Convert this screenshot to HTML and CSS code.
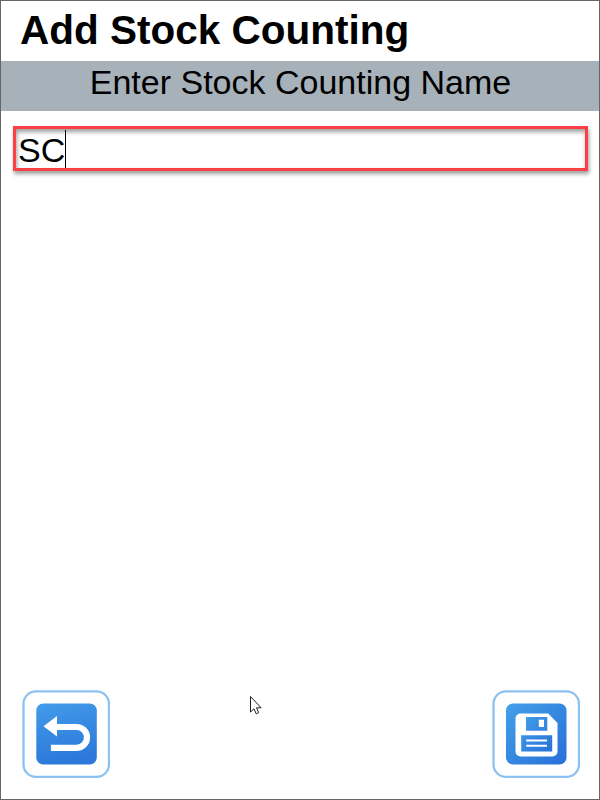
FILE: index.html
```html
<!DOCTYPE html>
<html lang="en">
<head>
<meta charset="utf-8">
<title>Add Stock Counting</title>
<link rel="stylesheet" href="styles.css">
</head>
<body>
<main class="screen">
  <h1 class="title">Add Stock Counting</h1>
  <h2 class="prompt">Enter Stock Counting Name</h2>
  <div class="field"><span class="value">SC</span><span class="caret"></span></div>
  <footer class="actions">
    <button class="action" aria-label="Back">
      <svg width="88" height="88" viewBox="0 0 88 88">
        <defs><linearGradient id="back" x1="0" y1="0" x2=".25" y2="1"><stop offset="0" stop-color="#439be9"/><stop offset="1" stop-color="#2c79db"/></linearGradient></defs>
        <rect x="1.500" y="1.400" width="85.500" height="85.500" rx="12.500" fill="#fff" stroke="#8dc1f2" stroke-width="2.300"/>
        <g transform="translate(14.300 13.500)">
          <rect width="60.500" height="61" rx="7" fill="url(#back)"/>
          <path d="M7.200 22.700 20.700 12.600v20.400z" fill="#fff"/>
          <path d="M19 23.500h21.300a10.400 10.400 0 0 1 0 20.800H14.600" fill="none" stroke="#fff" stroke-width="6.200"/>
        </g>
      </svg>
    </button>
    <button class="action" aria-label="Save">
      <svg width="88" height="88" viewBox="0 0 88 88">
        <defs><linearGradient id="save" x1="0" y1="0" x2="1" y2="1"><stop offset="0" stop-color="#439fe9"/><stop offset="1" stop-color="#2870d8"/></linearGradient></defs>
        <rect x="1.500" y="1.400" width="85.500" height="85.500" rx="12.500" fill="#fff" stroke="#8dc1f2" stroke-width="2.300"/>
        <g transform="translate(14 13.500)">
          <rect width="60.500" height="61" rx="7" fill="url(#save)"/>
          <path d="M14 10h28.200l9.300 9.500V48a5 5 0 0 1-5 5H14.500a5 5 0 0 1-5-5V15a5 5 0 0 1 5-5z" fill="#fff"/>
          <path d="M20 13.500h21.300v13.700H20zM15.200 31.700h31V48h-31z" fill="url(#save)"/>
          <path d="M32.800 16.200H38v7.300h-5.200zM20.200 36h20.800v2H20.200zM20.200 41.300h20.800v2H20.200z" fill="#fff"/>
        </g>
      </svg>
    </button>
  </footer>
  <svg class="pointer" width="14" height="21" viewBox="0 0 14 21"><path d="M2.500 1.500v15.500l3.500-3.200 2.200 5 2.500-1.100-2.200-4.900h4.600z" fill="#fff" stroke="#20202c" stroke-width="1"/></svg>
</main>
</body>
</html>
```
FILE: styles.css
```css
* { box-sizing: border-box; }
body { margin: 0; font-family: "Liberation Sans", Arial, sans-serif; color: #000; }
.screen {
  position: relative;
  display: flex;
  flex-direction: column;
  width: 600px;
  height: 800px;
  border: 1px solid #666;
  background: #fff;
}
.title {
  height: 60px;
  margin: 0;
  padding: 6px 0 0 19px;
  font-size: 40.5px;
  line-height: 46px;
  font-weight: 700;
  white-space: nowrap;
}
.prompt {
  height: 50px;
  margin: 0;
  padding: 1px 0 0 1px;
  background: #a7b1b9;
  text-align: center;
  font-size: 34px;
  line-height: 40px;
  font-weight: 400;
}
.field {
  display: flex;
  height: 45px;
  margin: 15px 11px 0 12px;
  padding: 1px 0 0 2px;
  border: 3px solid #fb4145;
  box-shadow: 1px 3px 4px rgba(0, 0, 0, .38), inset 1px 3px 4px rgba(0, 0, 0, .38);
  font-size: 34px;
  line-height: 40px;
}
.caret { width: 1px; height: 38px; background: #000; }
.actions {
  display: flex;
  justify-content: space-between;
  margin-top: auto;
  padding: 0 19px 21px 21px;
}
.action {
  display: flex;
  width: 88px;
  height: 88px;
  padding: 0;
  border: 0;
  background: transparent;
}
.pointer { position: absolute; left: 247px; top: 694px; }
```
